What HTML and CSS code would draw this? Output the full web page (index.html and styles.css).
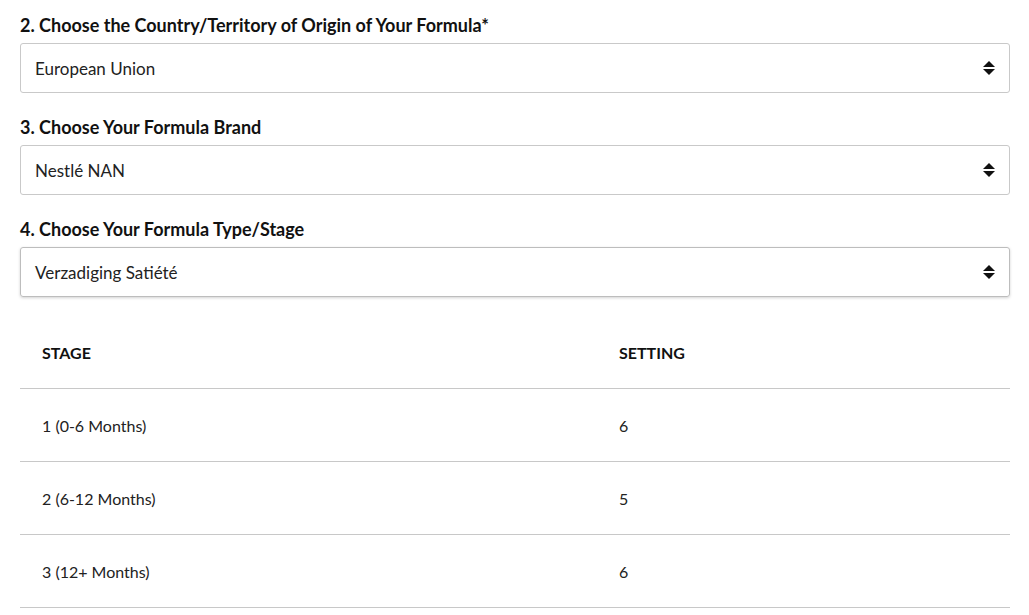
FILE: index.html
```html
<!DOCTYPE html>
<html>
<head>
<meta charset="utf-8">
<link rel="stylesheet" href="styles.css">
</head>
<body>
<div class="page">
  <div class="field">
    <div class="label">2. Choose the Country/Territory of Origin of Your Formula*</div>
    <div class="select"><span>European Union</span><span class="arrows"><i class="up"></i><i class="down"></i></span></div>
  </div>
  <div class="field">
    <div class="label">3. Choose Your Formula Brand</div>
    <div class="select"><span>Nestlé NAN</span><span class="arrows"><i class="up"></i><i class="down"></i></span></div>
  </div>
  <div class="field">
    <div class="label">4. Choose Your Formula Type/Stage</div>
    <div class="select focused"><span>Verzadiging Satiété</span><span class="arrows"><i class="up"></i><i class="down"></i></span></div>
  </div>
  <table class="table">
    <thead>
      <tr><th class="c1">STAGE</th><th>SETTING</th></tr>
    </thead>
    <tbody>
      <tr><td class="c1">1 (0-6 Months)</td><td>6</td></tr>
      <tr><td class="c1">2 (6-12 Months)</td><td>5</td></tr>
      <tr><td class="c1">3 (12+ Months)</td><td>6</td></tr>
    </tbody>
  </table>
</div>
</body>
</html>
```

FILE: styles.css
```css
html, body {
  margin: 0;
  padding: 0;
  background: #fff;
}
body {
  font-family: Lato, "Open Sans", Arial, sans-serif;
  color: #1a1a1a;
}
.page {
  padding: 13px 19px 0 20px;
}
.field + .field {
  margin-top: 22px;
}
.label {
  font-weight: 700;
  font-size: 18px;
  line-height: 24px;
  height: 24px;
  margin-bottom: 6px;
  color: #111;
}
.select {
  height: 48px;
  border: 1px solid #c9c9c9;
  border-radius: 3px;
  display: flex;
  align-items: center;
  justify-content: space-between;
  padding: 0 14px 0 14px;
  font-size: 17px;
  color: #222;
}
.select.focused {
  box-shadow: 0 1px 3px rgba(0,0,0,0.18);
  border-color: #bdbdbd;
}
.arrows {
  display: flex;
  flex-direction: column;
  gap: 2px;
  align-items: center;
}
.arrows i {
  display: block;
  width: 0;
  height: 0;
  border-left: 6px solid transparent;
  border-right: 6px solid transparent;
}
.arrows .up {
  border-bottom: 6px solid #111;
}
.arrows .down {
  border-top: 6px solid #111;
}
.table {
  width: 100%;
  border-collapse: collapse;
  margin-top: 20px;
}
.table th, .table td {
  text-align: left;
  padding: 0 0 0 22px;
  border-bottom: 1px solid #c8c8c8;
}
.table th {
  height: 71px;
  font-size: 16px;
  font-weight: 700;
  color: #111;
}
.table td {
  height: 72px;
  font-size: 16px;
  color: #222;
}
.table .c1 {
  width: 555px;
}
```
